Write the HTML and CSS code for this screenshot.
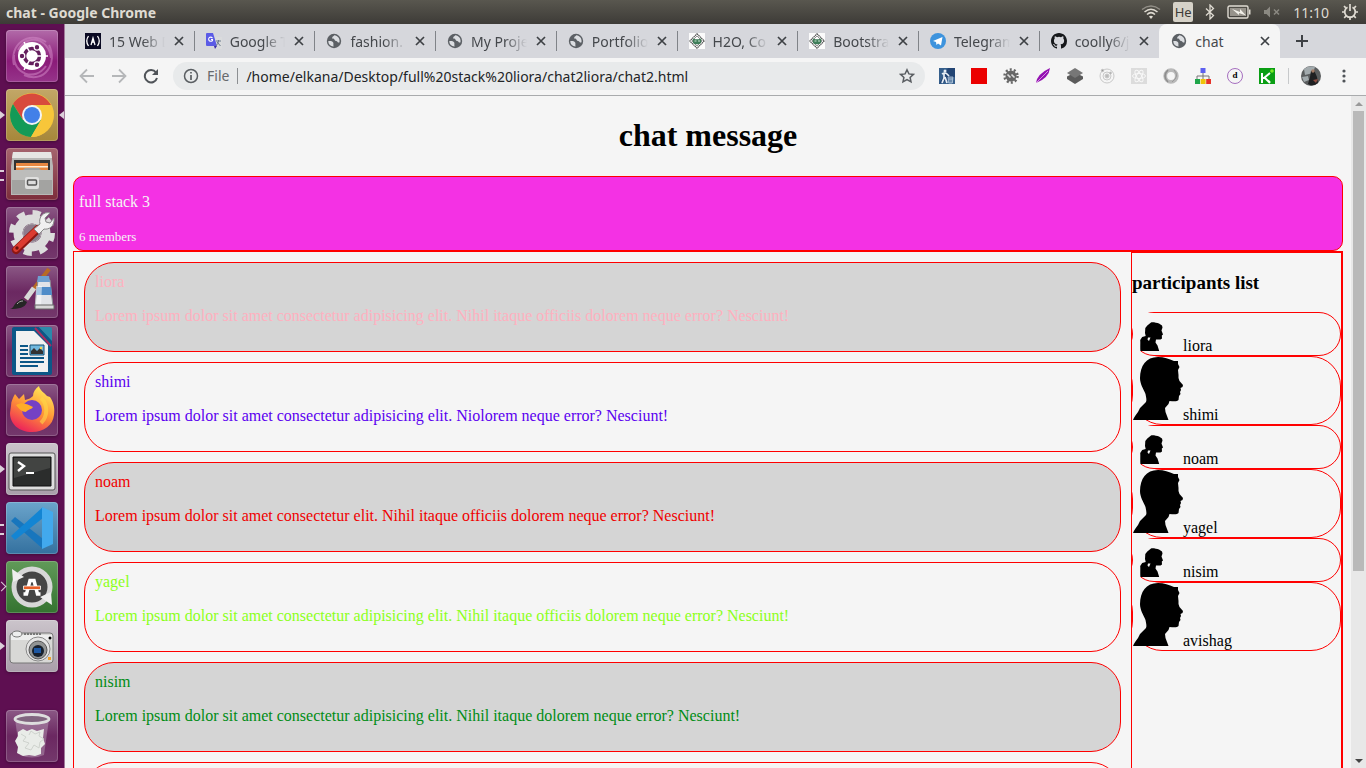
FILE: index.html
```html
<!DOCTYPE html>
<html lang="en">
<head>
<meta charset="utf-8">
<title>chat</title>
<link rel="stylesheet" href="styles.css">
</head>
<body>
<svg class="defs" aria-hidden="true">
  <symbol id="globe" viewBox="0 0 16 16"><circle cx="8" cy="8" r="7.200" fill="#5c6065"/><path d="M2.200 8.200c2.200-.3 4 .1 5 1.300.6 1.300-.2 2 .4 3.900C4.600 13.500 2.500 11.500 2.200 8.200zM8.200 2.300c-.4 1.200-2.200 1.300-2 2.700.3 1.300 2.400.4 2.500 1.900.5 1.500 2.300.4 2.900 2 .3.900 1.300.8 1.900.4.600-3.700-1.600-6.600-5.300-7z" fill="#dcdee2"/></symbol>
  <symbol id="close" viewBox="0 0 12 12"><path d="M2 2l8 8M10 2l-8 8" stroke="#3e4145" stroke-width="1.700"/></symbol>
  <symbol id="robot" viewBox="0 0 16 16"><path fill="#fbfbfb" d="M0 0h16v16H0z"/><path d="M8 .8L15.200 8 8 15.200.8 8z" fill="#fff" stroke="#555" stroke-width="1.200" stroke-dasharray="1.500 .5"/><path d="M8 3l5 5-5 5-5-5z" fill="none" stroke="#777" stroke-width=".8"/><path d="M3.800 5.500l2.700.8h3l2.700-.8v3.500c0 1.500-2 2.300-4.200 2.300S3.800 10.500 3.800 9z" fill="#3f7d59"/><path d="M5.500 7.500h2v1h-2zM9 7.500h2v1H9z" fill="#c7e5d2"/></symbol>
  <symbol id="man" viewBox="0 0 50 63"><path fill="#f5f5f5" d="M0 0h50v63H0z"/><path d="M25 0c6 0 11 2 16 4l4 0 0 3 1.500 3-1.500 3 .5 5 0 3 1 3 3.500 4-.5 2-2 1 .5 2-1 2 .5 2-1.500 2-.5 4c-1 1.500-4 1.500-9 1l-1 3-3.500 4 .5 4 3 8H0c1-3 3-5 5-8l2-4 6-6c1-2 0-5-.5-8-2-5-5.500-10-5.500-16C7 9 13 0 25 0z"/></symbol>
  <symbol id="woman" viewBox="0 0 50 38"><path fill="#f5f5f5" d="M0 0h50v38H0z"/><path fill-rule="evenodd" d="M18 9.500c2-.5 6 .5 8 1l3 2 .5 2-1 3 1.500 4-1.200 1 .2 3-1.500 1H23l-.5 3 2 3 2 6.500H7.500c-.5-5 0-8-.3-12l2-3 3.500-1-.7-3 .3-5 2-2.500zM15 24.500l-.5 2 1.500 1.500 1.500-3.500z"/></symbol>
</svg>

<header class="panel">
  <span class="panel-title">chat - Google Chrome</span>
  <div class="indicators">
    <svg width="20" height="16" viewBox="0 0 20 16" fill="none" stroke="#dfdbd2" stroke-width="1.500"><path d="M1 5.500Q10-1.500 19 5.500" opacity=".45"/><path d="M3.500 8Q10 2.500 16.500 8M6 10.500Q10 6.800 14 10.500"/><path d="M8 12.500l2 2.500 2-2.500q-2-1.500-4 0z" fill="#dfdbd2" stroke="none"/></svg>
    <span class="lang">He</span>
    <svg width="10" height="16" viewBox="0 0 10 16" fill="none" stroke="#dfdbd2" stroke-width="1.300"><path d="M1 4.500l7.500 7L5 15V1l3.500 3.500-7.500 7"/></svg>
    <svg width="24" height="14" viewBox="0 0 24 14"><rect x="1" y="1" width="20" height="12" rx="1.500" fill="none" stroke="#dfdbd2" stroke-width="1.400"/><path d="M3 3h16v8H3z" fill="#97938b"/><path d="M22 4.500h1.500v5H22z" fill="#dfdbd2"/><path d="M5 4l8 3V4l6 6.500-7-2.500v2z" fill="#f2f0e9"/></svg>
    <svg width="18" height="14" viewBox="0 0 18 14" fill="#8b8982"><path d="M1 5h2.500L7 1.500v11L3.500 9H1z"/><path d="M11 4.500l5 5M16 4.500l-5 5" stroke="#8b8982" stroke-width="1.500"/></svg>
    <time class="clock">11:10</time>
    <svg width="18" height="18" viewBox="0 0 18 18" fill="none" stroke="#dfdbd2"><path d="M6.500 4.300a5.300 5.300 0 1 0 5 0" stroke-width="1.800"/><path d="M9 1v7" stroke-width="1.700"/><path d="M4.800 4.800L3 3M13.200 4.800L15 3M3.500 9H1M14.500 9H17M5 13l-1.800 1.800M13 13l1.800 1.800M9 14.500V17" stroke-width="1.700"/></svg>
  </div>
</header>

<div class="desktop">
<nav class="launcher" aria-label="Launcher">
  <button class="app app-plum" aria-label="Dash"><svg viewBox="0 0 52 52"><path d="M8 35C3 15 22 0 40 12M18 45C39 54 52 33 43 15M12 20C21 3 43 8 45 28M40 36C29 52 7 44 8 25" fill="none" stroke="#d78fcb" stroke-width="2" opacity=".5"/><circle cx="26" cy="26" r="14" fill="#fff"/><circle cx="26" cy="26" r="7.500" fill="none" stroke="#641e5d" stroke-width="3.500"/><path d="M26 26H42M26 26L18 12.100M26 26L18 39.900" stroke="#fff" stroke-width="1.500"/><g fill="#641e5d" stroke="#fff" stroke-width="1.200"><circle cx="16" cy="26" r="2.800"/><circle cx="31" cy="17.300" r="2.800"/><circle cx="31" cy="34.700" r="2.800"/></g></svg></button>
  <button class="app app-gold run focus" aria-label="Google Chrome"><svg viewBox="0 0 52 52"><circle cx="26" cy="26" r="22" fill="#f7c63a"/><path d="M7 15a22 22 0 0 1 38 1H26L17 31z" fill="#d84a3c"/><path d="M7 15a22 22 0 0 0 18 33l10-17H17z" fill="#139a57"/><path d="M45 16H26l9 15-10 17a22 22 0 0 0 20-32z" fill="#f7c63a"/><circle cx="26" cy="26" r="10" fill="#f4f4f4"/><circle cx="26" cy="26" r="8" fill="#4280e8"/></svg></button>
  <button class="app app-brick run2" aria-label="Files"><svg viewBox="0 0 52 52"><path d="M7 4h38l2 14v29H5V18z" fill="#b8b8b6"/><path d="M7 4h38l1 6H6z" fill="#e6e6e4"/><path d="M8 12h36v12H8z" fill="#333"/><path d="M10 15h32v7H10z" fill="#e78740"/><path d="M10 18h32v1.500H10z" fill="#fff0d8"/><path d="M6 22h11l2-2h14l2 2h11v24H6z" fill="#a3a3a1"/><path d="M6 22h40v10H6z" fill="#bdbdbb"/><rect x="19" y="29" width="14" height="12" rx="2" fill="#e0e0df"/><rect x="21.500" y="32" width="9" height="5" rx="1" fill="#ddd" stroke="#555" stroke-width="1.500"/></svg></button>
  <button class="app app-mauve" aria-label="System Settings"><svg viewBox="0 0 52 52"><circle cx="26" cy="26" r="14" fill="none" stroke="#dcdcdc" stroke-width="9"/><circle cx="26" cy="26" r="20" fill="none" stroke="#dcdcdc" stroke-width="6" stroke-dasharray="8 7.700"/><circle cx="26" cy="26" r="9" fill="#8e7c8d" stroke="#aaa"/><path d="M32 22L10 43" stroke="#8d1712" stroke-width="8" stroke-linecap="round"/><path d="M31 22L10 42" stroke="#dc3c30" stroke-width="5.500" stroke-linecap="round"/><path d="M28 22l6-5c-2-7 4-13 10-11l-5 5 1 4 4 1 4-5c1 8-5 12-10 11l-5 5z" fill="#f0f0f0" stroke="#888"/><circle cx="11" cy="41" r="1.700" fill="#6c100d"/></svg></button>
  <button class="app app-mauve" aria-label="Paint"><svg viewBox="0 0 52 52"><path d="M43 3L20 33" stroke="#b76a25" stroke-width="4"/><path d="M28 22l-8 11" stroke="#d8d8d8" stroke-width="5"/><path d="M4 43c5-1 3-7 12-10l5 3c-2 6-8 7-17 7z" fill="#252525"/><path d="M11 38c2-2 3-3 6-3" stroke="#aaa" fill="none"/><path d="M32 14h12l3 27H29z" fill="#e1e3e8" stroke="#8c8c94"/><path d="M31 21h14l1 8H30z" fill="#4f8cc9"/><path d="M30 20h6l-1 20h-6z" fill="#fff" opacity=".5"/><path d="M32 10h11l1 6H31z" fill="#6e9fd0"/><path d="M29 39h19v4H29z" fill="#d8d8d8" stroke="#666"/></svg></button>
  <button class="app app-mauve" aria-label="Writer"><svg viewBox="0 0 52 52"><path d="M8 2h25l13 13v33q0 2-2 2H8q-2 0-2-2V4q0-2 2-2z" fill="#0c5787"/><path d="M10 6h18l14 14v27H10z" fill="#f1f1f1"/><path d="M33 2h11q2 0 2 2v12z" fill="#2b89aa"/><path d="M29 3l16 18" stroke="#a72d60" stroke-width="2"/><path d="M14 21h8M14 25h8M14 29h8M14 33h24M14 37h24M14 41h18" stroke="#0c5787" stroke-width="1.800"/><path d="M24 20h14v10H24z" fill="#70b8df" stroke="#124f75"/><path d="M25 29v-3l3-3 3 3 3-3 3 3v3z" fill="#333"/><circle cx="35" cy="23" r="1.300" fill="#f5d34f"/></svg></button>
  <button class="app app-mauve" aria-label="Firefox"><svg viewBox="0 0 52 52"><defs><linearGradient id="fx" x1=".8" y1="0" x2=".3" y2="1"><stop stop-color="#fff15b"/><stop offset=".5" stop-color="#ff9636"/><stop offset="1" stop-color="#ec205b"/></linearGradient></defs><path d="M5 22c0-5 2-8 4-12l4 5 5-5 1 6c4-1 6-2 8-4 0-4 2-7 6-10 1 5 5 6 8 10l3 1c4 6 5 12 4 18-1 10-10 17-22 17C13 48 4 40 4 29z" fill="url(#fx)"/><circle cx="26" cy="26" r="10" fill="#7441c5"/><path d="M10 21c7-4 12 0 17 2-2 3-5 2-7 5-4 0-7-3-10-7z" fill="#ffac28"/><path d="M35 14c7 6 7 18 0 25" fill="none" stroke="#ffd746" stroke-width="4" opacity=".6"/></svg></button>
  <button class="app app-silver run" aria-label="Terminal"><svg viewBox="0 0 52 52"><rect x="3" y="10" width="46" height="37" rx="2" fill="#dedede" stroke="#555"/><path d="M7 14h38v29H7z" fill="#2b2d2c" stroke="#111"/><path d="M8 15h36v10L8 35z" fill="#515351" opacity=".6"/><path d="M12 19l6 4-6 5" fill="none" stroke="#fff" stroke-width="2.400"/><path d="M20 30h8" stroke="#fff" stroke-width="2"/></svg></button>
  <button class="app app-blue run2" aria-label="Visual Studio Code"><svg viewBox="0 0 52 52"><path d="M5 19l4-4 28 22v10z" fill="#1876bd"/><path d="M5 34l4 4 28-22V5z" fill="#1385d3"/><path d="M36 5l11 5v32l-11 5z" fill="#42a9ed"/></svg></button>
  <button class="app app-green idle" aria-label="Software Updater"><svg viewBox="0 0 52 52"><circle cx="26" cy="26" r="18" fill="#454545" stroke="#d7d7d7" stroke-width="5"/><path d="M6 8l1 13 11-5zM46 44l-1-13-11 5z" fill="#eee"/><path d="M17.500 33h3L24 19.500h4L31.500 33h3" fill="none" stroke="#fff" stroke-width="3.500"/><path d="M17.500 25h17v3.500h-17z" fill="#e75e27" stroke="#fff" stroke-width=".8"/></svg></button>
  <button class="app app-silver run" aria-label="Screenshot"><svg viewBox="0 0 52 52"><rect x="4" y="13" width="43" height="30" rx="3" fill="#d8d8d6" stroke="#777"/><path d="M5 15h41v5H5z" fill="#eee"/><ellipse cx="11" cy="14" rx="5" ry="3" fill="#eee" stroke="#777"/><circle cx="32" cy="29" r="12" fill="#e5e5e5" stroke="#888"/><circle cx="32" cy="30" r="9" fill="#929494" stroke="#555"/><circle cx="32" cy="31" r="6" fill="#17202d"/><path d="M28 28h7v5h-7z" fill="#1d57a2"/><circle cx="44" cy="18" r="1.500"/><path d="M42 37h3v3h-3z" fill="#efa12f"/><path d="M18 14h17" stroke="#777" stroke-width="2" stroke-dasharray="2 1"/></svg></button>
  <button class="app app-mauve trash" aria-label="Trash"><svg viewBox="0 0 52 52"><path d="M9 9h34l-5 36q-12 5-24 0z" fill="#d5c6d5" opacity=".35"/><path d="M12 22l5-3 4 2 5-2 5 2 7-2-1 9 2 6-4 4 0 6-6 2-6-1-6 1-6-3 1-6-3-6 3-5z" fill="#e9ece8"/><path d="M15 24l5 3-3 4 6 2-4 5 6 2 3-5 5 3 1-6 4-3-5-3 1-4-5 2-4-3-2 4" fill="none" stroke="#cbcfca" stroke-width=".9"/><ellipse cx="26" cy="9" rx="17" ry="4.500" fill="#81657f" stroke="#dedede" stroke-width="2.800"/></svg></button>
</nav>

<section class="browser">
  <div class="tabstrip">
    <div class="tabs">
      <div class="tab"><svg class="fav" viewBox="0 0 16 16"><path fill="#0a0a23" d="M0 0h16v16H0z"/><path d="M3.500 3Q0 8 3.500 13M12.500 3Q16 8 12.500 13M6 12l2-7 2 7M6.500 9h3" fill="none" stroke="#fff" stroke-width="1.300"/></svg><span class="name">15 Web D</span><button aria-label="Close"><svg><use href="#close"/></svg></button></div>
      <div class="tab"><svg class="fav" viewBox="0 0 16 16"><path d="M7 4h9v12H9z" fill="#dadbdd"/><path d="M0 1q0-1 1-1h6l4 13H1q-1 0-1-1z" fill="#5b5be6"/><path d="M8 13h3l-2 3z" fill="#3a2ba9"/><path d="M6.500 5Q5 3.500 3.300 4.500 2 6 3 7.500q2 1.500 3.500 0V6.500H5" fill="none" stroke="#fff" stroke-width="1.100"/><path d="M10 8h5M12.500 7v1q0 3-3 5M11 9l3.500 4" stroke="#6b7b8d" fill="none"/></svg><span class="name">Google T</span><button aria-label="Close"><svg><use href="#close"/></svg></button></div>
      <div class="tab"><svg class="fav"><use href="#globe"/></svg><span class="name">fashion.</span><button aria-label="Close"><svg><use href="#close"/></svg></button></div>
      <div class="tab"><svg class="fav"><use href="#globe"/></svg><span class="name">My Proje</span><button aria-label="Close"><svg><use href="#close"/></svg></button></div>
      <div class="tab"><svg class="fav"><use href="#globe"/></svg><span class="name">Portfolio</span><button aria-label="Close"><svg><use href="#close"/></svg></button></div>
      <div class="tab"><svg class="fav"><use href="#robot"/></svg><span class="name">H2O, Co</span><button aria-label="Close"><svg><use href="#close"/></svg></button></div>
      <div class="tab"><svg class="fav"><use href="#robot"/></svg><span class="name">Bootstra</span><button aria-label="Close"><svg><use href="#close"/></svg></button></div>
      <div class="tab"><svg class="fav" viewBox="0 0 16 16"><circle cx="8" cy="8" r="8" fill="#3d93dd"/><path d="M3 8l9.500-4L11 12.500 8 10.500 6.500 12 6 9z" fill="#fff"/></svg><span class="name">Telegram</span><button aria-label="Close"><svg><use href="#close"/></svg></button></div>
      <div class="tab"><svg class="fav" viewBox="0 0 16 16"><path fill="#16181b" d="M8 0C3.580 0 0 3.580 0 8c0 3.540 2.290 6.530 5.470 7.590.4.070.55-.17.55-.38 0-.19-.01-.82-.01-1.490-2.010.37-2.530-.49-2.690-.94-.09-.23-.48-.94-.82-1.130-.28-.15-.68-.52-.01-.53.63-.01 1.080.58 1.230.82.72 1.210 1.870.87 2.330.66.07-.52.28-.87.51-1.070-1.780-.2-3.640-.89-3.640-3.950 0-.87.31-1.590.82-2.150-.08-.2-.36-1.020.08-2.120 0 0 .67-.21 2.200.82a7.600 7.600 0 0 1 4 0c1.530-1.040 2.200-.82 2.200-.82.44 1.100.16 1.920.08 2.120.51.56.82 1.270.82 2.150 0 3.070-1.870 3.750-3.650 3.950.29.25.54.73.54 1.480 0 1.070-.01 1.930-.01 2.200 0 .21.15.46.55.38A8 8 0 0 0 16 8c0-4.420-3.580-8-8-8z"/></svg><span class="name">coolly6/j</span><button aria-label="Close"><svg><use href="#close"/></svg></button></div>
      <div class="tab active"><svg class="fav"><use href="#globe"/></svg><span class="name">chat</span><button aria-label="Close"><svg><use href="#close"/></svg></button></div>
    </div>
    <button class="newtab" aria-label="New tab"><svg width="14" height="14" viewBox="0 0 14 14"><path d="M7 1v12M1 7h12" stroke="#3e4145" stroke-width="2"/></svg></button>
  </div>

  <div class="toolbar">
    <button class="tool" aria-label="Back"><svg viewBox="0 0 16 16" fill="none" stroke="#b5b7b9" stroke-width="1.800"><path d="M15 8H2M8 1.500L1.500 8 8 14.500"/></svg></button>
    <button class="tool" aria-label="Forward"><svg viewBox="0 0 16 16" fill="none" stroke="#b5b7b9" stroke-width="1.800"><path d="M1 8h13M8 1.500L14.500 8 8 14.500"/></svg></button>
    <button class="tool" aria-label="Reload"><svg viewBox="0 0 16 16"><path d="M13 4.500A6.200 6.200 0 1 0 14 10" fill="none" stroke="#505459" stroke-width="2"/><path d="M15 1v6H9z" fill="#505459"/></svg></button>
    <div class="omnibox">
      <svg width="16" height="16" viewBox="0 0 16 16"><circle cx="8" cy="8" r="6.500" fill="none" stroke="#5a5e62" stroke-width="1.500"/><path d="M8 4v1.600M8 7v5" stroke="#5a5e62" stroke-width="1.700"/></svg>
      <label for="url">File</label>
      <input id="url" type="text" value="/home/elkana/Desktop/full%20stack%20liora/chat2liora/chat2.html">
      <button aria-label="Bookmark"><svg width="16" height="16" viewBox="0 0 16 16"><path d="M8 1.800l1.900 4.100 4.500.5-3.300 3 .9 4.400L8 11.600l-4 2.200.9-4.400-3.300-3 4.500-.5z" fill="none" stroke="#5a5e62" stroke-width="1.500"/></svg></button>
    </div>
    <div class="extensions">
      <svg viewBox="0 0 16 16"><path fill="#365f8c" d="M0 0h16v16H0z"/><path d="M0 16L9 0h7v9z" fill="#234574"/><circle cx="6" cy="3" r="1.500" fill="#e8eef5"/><path d="M3 6q3-2 5 0l2 2M5 5v5l-2 5M6 9l2 6" stroke="#e8eef5" stroke-width="1.700" fill="none"/><path d="M9 9h5l-.7 6H9.700zM9 11h5M11 9v6M13 9v6" stroke="#b8cce0" fill="none" stroke-width=".8"/></svg>
      <svg viewBox="0 0 16 16"><path fill="#eb0000" d="M0 0h16v16H0z"/></svg>
      <svg viewBox="0 0 16 16"><circle cx="8" cy="8" r="5.500" fill="#666"/><circle cx="8" cy="8" r="6.500" fill="none" stroke="#666" stroke-width="2.500" stroke-dasharray="2 2.080"/><path d="M4.500 6.500l3 3M8.500 6.500l3 3" stroke="#ddd" stroke-width="1.600"/></svg>
      <svg viewBox="0 0 16 16"><path d="M1 15Q2 6 15 0q-1 10-14 15z" fill="#9412b2"/><path d="M1 15L13 3" stroke="#e4b1ee" stroke-width=".8"/></svg>
      <svg viewBox="0 0 16 16"><path d="M8 4.500l8 4v2.500l-8 5-8-5V8.500z" fill="#5b5b5b"/><path d="M8 0l8 5-8 5-8-5z" fill="#777"/></svg>
      <svg viewBox="0 0 16 16" fill="none" stroke="#c9c9c9"><circle cx="8" cy="8" r="7"/><circle cx="8" cy="8" r="4"/><circle cx="8" cy="8" r="2" fill="#bbb"/><circle cx="3.500" cy="2.500" r="1.200" fill="#999"/><circle cx="11.500" cy="5" r="1" fill="#999"/></svg>
      <svg viewBox="0 0 16 16"><path fill="#dcdcdc" d="M0 0h16v16H0z"/><g fill="none" stroke="#f8f8f8"><ellipse cx="8" cy="8" rx="6.500" ry="2.500"/><ellipse cx="8" cy="8" rx="6.500" ry="2.500" transform="rotate(60 8 8)"/><ellipse cx="8" cy="8" rx="6.500" ry="2.500" transform="rotate(120 8 8)"/></g></svg>
      <svg viewBox="0 0 16 16" fill="none"><circle cx="8" cy="8" r="5.800" stroke="#b9b9b9" stroke-width="3.800"/><path d="M5 2Q-1 8 5 14" stroke="#8d8d8d" stroke-width="1.500"/><path d="M11 2q6 6-2 12" stroke="#999"/></svg>
      <svg viewBox="0 0 16 16"><path d="M8 4v8M2 12V8h12v4" fill="none" stroke="#777"/><path d="M5.500 0h5v5h-5z" fill="#5d60f0"/><path d="M0 11h5v5H0z" fill="#1fa64a"/><path d="M5.600 11h5v5h-5z" fill="#efc40a"/><path d="M11.200 11H16v5h-4.800z" fill="#e63329"/></svg>
      <span class="ext-d">d</span>
      <svg viewBox="0 0 16 16"><path fill="#0a9e14" d="M0 0h16v16H0z"/><path d="M3 5v10M3 10h2l6-5M5 9l6 6M8 12l3 2" stroke="#fff" stroke-width="2" fill="none"/><circle cx="13" cy="3" r="1.800" fill="#7bea28"/></svg>
    </div>
    <button class="avatar" aria-label="Profile"><svg viewBox="0 0 20 20"><circle cx="10" cy="10" r="10" fill="#5a5d5e"/><path d="M3 3q5-4 11-2l-2 6-8 2zM1 11l6-1 1 4-5 2z" fill="#a2aaad"/><path d="M10 5l3-1 3 7 1 6q-5 4-10 1l2-7z" fill="#1f2022"/><circle cx="12" cy="5" r="1.700" fill="#a27c68"/><path d="M12 14l5-1-2 4z" fill="#8d4c40"/></svg></button>
    <button class="menu" aria-label="Menu"><svg width="4" height="14" viewBox="0 0 4 14" fill="#505459"><circle cx="2" cy="2" r="1.600"/><circle cx="2" cy="7" r="1.600"/><circle cx="2" cy="12" r="1.600"/></svg></button>
  </div>

  <div class="viewport">
    <main class="page">
      <h1>chat message</h1>
      <div class="group"><p>full stack 3</p><p><small>6 members</small></p></div>
      <div class="chat">
        <div class="messages">
          <article class="message shaded pink"><p>liora</p><p>Lorem ipsum dolor sit amet consectetur adipisicing elit. Nihil itaque officiis dolorem neque error? Nesciunt!</p></article>
          <article class="message blue"><p>shimi</p><p>Lorem ipsum dolor sit amet consectetur adipisicing elit. Niolorem neque error? Nesciunt!</p></article>
          <article class="message shaded red"><p>noam</p><p>Lorem ipsum dolor sit amet consectetur elit. Nihil itaque officiis dolorem neque error? Nesciunt!</p></article>
          <article class="message lime"><p>yagel</p><p>Lorem ipsum dolor sit amet consectetur adipisicing elit. Nihil itaque officiis dolorem neque error? Nesciunt!</p></article>
          <article class="message shaded green"><p>nisim</p><p>Lorem ipsum dolor sit amet consectetur adipisicing elit. Nihil itaque dolorem neque error? Nesciunt!</p></article>
          <article class="message shaded"></article>
        </div>
        <aside class="people">
          <h3>participants list</h3>
          <ul>
            <li><svg class="small"><use href="#woman"/></svg>liora</li>
            <li><svg class="big"><use href="#man"/></svg>shimi</li>
            <li><svg class="small"><use href="#woman"/></svg>noam</li>
            <li><svg class="big"><use href="#man"/></svg>yagel</li>
            <li><svg class="small"><use href="#woman"/></svg>nisim</li>
            <li><svg class="big"><use href="#man"/></svg>avishag</li>
          </ul>
        </aside>
      </div>
    </main>
    <div class="scrollbar"><span class="arrow up"></span><span class="thumb"></span><span class="arrow down"></span></div>
  </div>
</section>
</div>
</body>
</html>
```

FILE: styles.css
```css
* { box-sizing: border-box; }
body {
  margin: 0;
  height: 100vh;
  display: flex;
  flex-direction: column;
  overflow: hidden;
  background: #5c0f50;
  font-family: "Noto Sans", "Open Sans", sans-serif;
}
button { border: 0; padding: 0; background: none; display: flex; align-items: center; justify-content: center; font: inherit; }
svg { display: block; flex: none; }
.defs { position: absolute; width: 0; height: 0; }

/* Top panel */
.panel {
  height: 24px;
  flex: none;
  display: flex;
  align-items: center;
  justify-content: space-between;
  padding: 0 7px 0 6px;
  background: linear-gradient(#59574f, #3d3b37);
  color: #dfdbd2;
  font-size: 14px;
}
.panel-title { font-weight: 700; }
.indicators { display: flex; align-items: center; gap: 12px; }
.lang { background: #d6d2c8; color: #3d3b37; border-radius: 2px; width: 20px; height: 20px; line-height: 20px; text-align: center; font-size: 13px; }

.desktop { flex: 1; display: flex; min-height: 0; }

/* Launcher */
.launcher {
  width: 65px;
  flex: none;
  display: flex;
  flex-direction: column;
  gap: 7px;
  padding: 6px 0 6px 6px;
  background: #5e0f51;
  border-right: 1px solid #a27a9b;
}
.app { position: relative; width: 52px; height: 52px; flex: none; border-radius: 4px; box-shadow: inset 0 0 0 1px #ffffff30, 0 1px 3px #00000050; }
.app svg { width: 52px; height: 52px; }
.app-plum { background: linear-gradient(#b26ba9, #8b1b79 60%, #96348a); }
.app-gold { background: linear-gradient(#c2a767, #a6873a); }
.app-brick { background: linear-gradient(#a5646e, #7c2d3b); }
.app-mauve { background: linear-gradient(#8b5885, #6b2861 50%, #74386c); }
.app-silver { background: linear-gradient(#cbc4cb, #a99faa); }
.app-blue { background: linear-gradient(#6ba4cb, #34719f); }
.app-green { background: linear-gradient(#619a59, #347330); }
.trash { margin-top: auto; }
.run::before, .idle::before, .run2::before, .focus::after { content: ""; position: absolute; top: 22px; left: -6px; }
.run::before { border: 4px solid transparent; border-left: 5px solid #dcd0da; border-right: 0; }
.idle::before { width: 6px; height: 6px; left: -8px; border: solid #dcd0da; border-width: 1px 1px 0 0; transform: rotate(45deg); }
.run2::before { width: 4px; height: 7px; border: solid #dcd0da; border-width: 2px 0; }
.focus::after { left: 53px; border: 4px solid transparent; border-right: 5px solid #dcd0da; border-left: 0; }

/* Browser chrome */
.browser { flex: 1; min-width: 0; display: flex; flex-direction: column; background: #f5f5f5; }
.tabstrip { height: 34px; flex: none; display: flex; align-items: center; padding-left: 8px; background: #d6d7dc; }
.tabs { flex: 0 1 1207px; min-width: 0; height: 34px; display: flex; }
.tab { flex: 1 1 0; min-width: 0; display: flex; align-items: center; gap: 8px; padding: 0 9px 0 12px; position: relative; font-size: 14px; color: #45484c; }
.tab:not(.active):not(:nth-last-child(2))::after { content: ""; position: absolute; right: -1px; top: 7px; width: 1px; height: 20px; background: #808388; }
.fav { width: 16px; height: 16px; }
.name { flex: 1; min-width: 0; overflow: hidden; white-space: nowrap; -webkit-mask-image: linear-gradient(90deg, #000 60%, transparent); mask-image: linear-gradient(90deg, #000 60%, transparent); }
.tab button, .tab button svg { width: 12px; height: 12px; }
.active { background: #f5f5f5; border-radius: 8px 8px 0 0; }
.active .name { -webkit-mask-image: none; mask-image: none; }
.newtab { width: 28px; height: 28px; margin-left: 8px; }

.toolbar { height: 38px; flex: none; display: flex; align-items: center; padding: 0 14px 1px; border-bottom: 1px solid #a9abad; }
.tool { width: 16px; height: 16px; margin-right: 16px; }
.tool svg { width: 16px; height: 16px; }
.omnibox { flex: 1; min-width: 0; height: 28px; margin-right: 14px; margin-left: -2px; padding: 0 10px; display: flex; align-items: center; gap: 8px; border-radius: 14px; background: #e8eaeb; font-size: 14px; }
.omnibox label { color: #66696d; padding-right: 8px; border-right: 1px solid #8c8f92; line-height: 16px; }
.omnibox input { flex: 1; min-width: 0; border: 0; padding: 0; background: none; outline: 0; font: inherit; color: #222426; }
.extensions { display: flex; gap: 16px; padding-right: 13px; border-right: 1px solid #c7c9cb; }
.extensions svg { width: 16px; height: 16px; }
.ext-d { width: 16px; height: 16px; border: 1px solid #a66fc0; border-radius: 50%; font: bold 9px/13px "Liberation Serif", serif; text-align: center; }
.avatar { width: 20px; height: 20px; margin: 0 21px 0 12px; }
.avatar svg { width: 20px; height: 20px; }
.menu { width: 4px; height: 16px; margin-right: 6px; }

/* Page */
.viewport { flex: 1; min-height: 0; display: flex; font: 16px/18px "Liberation Serif", serif; }
.page { flex: 1; min-width: 0; padding: 0 8px; overflow: hidden; color: #000; }
h1 { margin: 21px 0 22px; font-size: 32px; line-height: 37px; text-align: center; }
.group { overflow: hidden; border: 1px solid red; border-radius: 10px; padding: 0 5px 4px; background: #f431e4; color: whitesmoke; }
.group p { margin: 16px 0 0; }
small { font-size: 13px; }
.chat { display: flex; border: 1px solid red; }
.messages { flex: 1; min-width: 0; padding: 10px; display: flex; flex-direction: column; gap: 10px; }
.message { min-height: 90px; border: 1px solid red; border-radius: 30px; padding: 10px 10px 26px; }
.message:last-child { background: none; }
.message p { margin: 0; }
.message p + p { margin-top: 16px; }
.shaded { background: #d5d5d5; }
.pink { color: #ffb0bf; }
.blue { color: #5b00f0; }
.red { color: #f00000; }
.lime { color: #8cff1a; }
.green { color: #008c14; }
.people { width: 211px; flex: none; border: 1px solid red; }
h3 { margin: 19px 0 18px; font-size: 19px; line-height: 22px; }
ul { margin: 0; padding: 0; list-style: none; }
li { border: 1px solid red; border-radius: 30px; }
li svg { display: inline-block; vertical-align: baseline; width: 50px; }
.small { height: 38px; }
.big { height: 63px; }

.scrollbar { width: 15px; flex: none; display: flex; flex-direction: column; align-items: center; background: #e8e8e8; }
.thumb { width: 11px; flex: 0 0 460px; background: #b9b9b9; }
.arrow { height: 15px; width: 8px; flex: none; display: flex; align-items: center; }
.arrow::before { content: ""; border: 4px solid transparent; }
.up::before { border-bottom-color: #999; border-top: 0; }
.down { margin-top: auto; }
.down::before { border-top-color: #444; border-bottom: 0; }
```
